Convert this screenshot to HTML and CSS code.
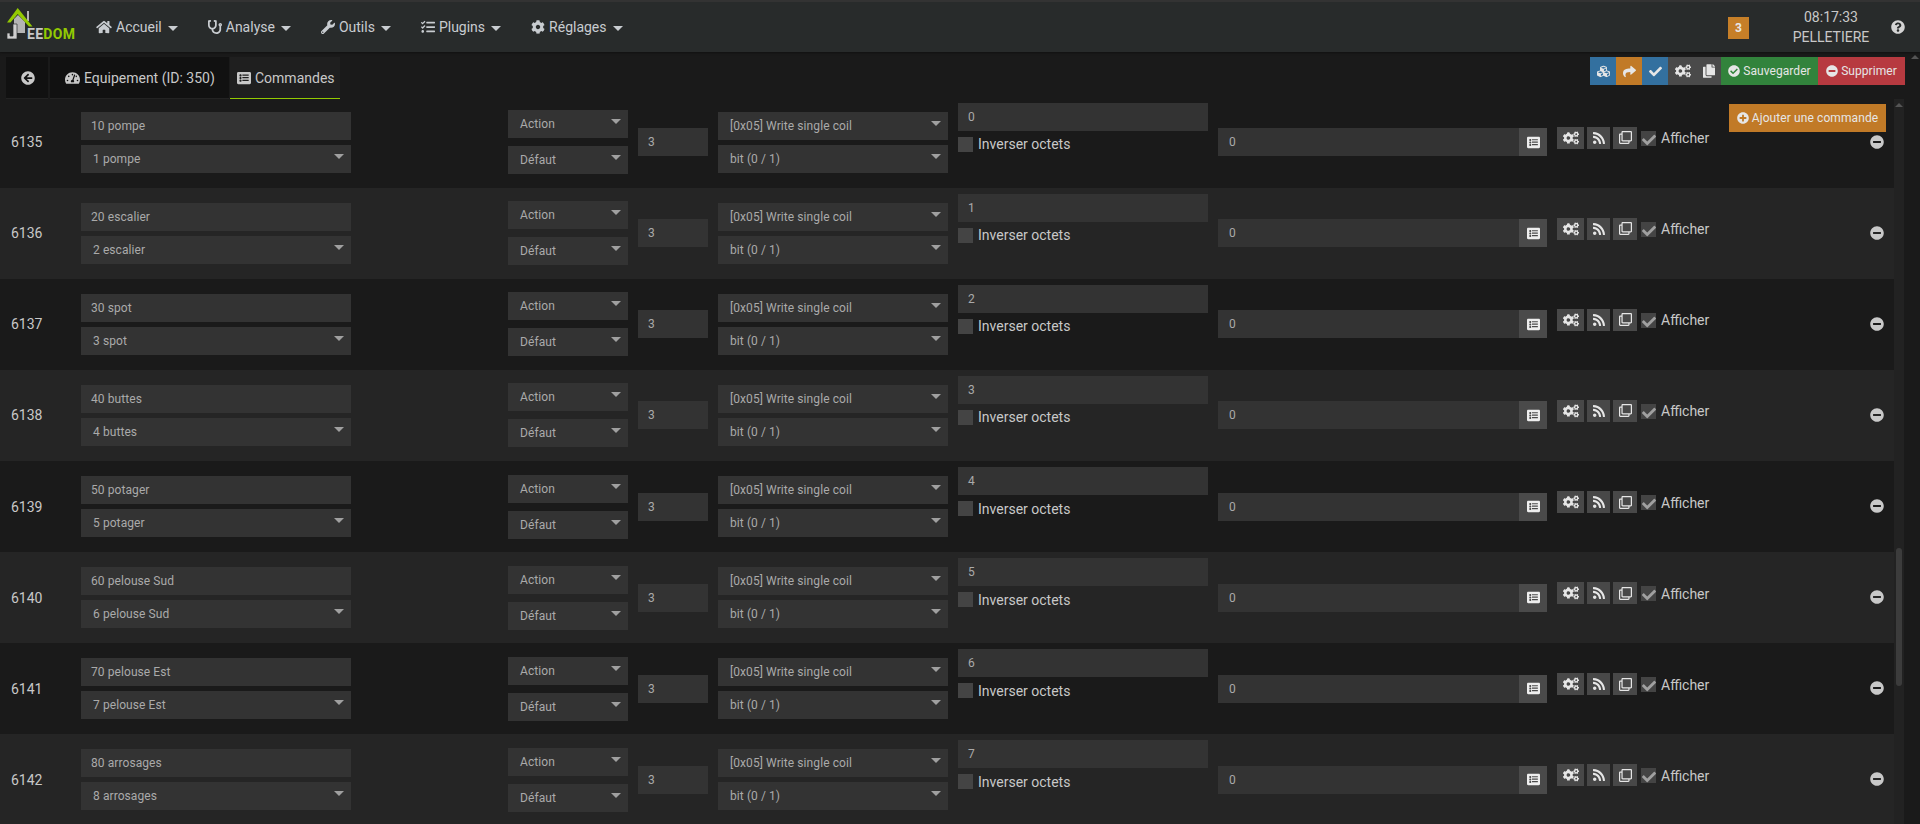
FILE: index.html
```html
<!DOCTYPE html>
<html lang="fr">
<head>
<meta charset="utf-8">
<title>Jeedom - Commandes</title>
<link rel="stylesheet" href="styles.css">
</head>
<body>
<svg class="sprite" xmlns="http://www.w3.org/2000/svg">
<symbol id="i-home" viewBox="0 0 576 512"><path d="M280.37 148.26L96 300.11V464a16 16 0 0 0 16 16l112.06-.29a16 16 0 0 0 15.92-16V368a16 16 0 0 1 16-16h64a16 16 0 0 1 16 16v95.64a16 16 0 0 0 16 16.05L464 480a16 16 0 0 0 16-16V300L295.67 148.26a12.19 12.19 0 0 0-15.3 0zM571.6 251.47L488 182.56V44.05a12 12 0 0 0-12-12h-56a12 12 0 0 0-12 12v72.61L318.47 43a48 48 0 0 0-61 0L4.34 251.47a12 12 0 0 0-1.6 16.9l25.5 31A12 12 0 0 0 45.15 301l235.22-193.74a12.19 12.19 0 0 1 15.3 0L530.9 301a12 12 0 0 0 16.9-1.6l25.5-31a12 12 0 0 0-1.7-16.93z"/></symbol>
<symbol id="i-steth" viewBox="0 0 512 512"><path d="M447.1 112c-34.2.5-62.3 28.4-63 62.6-.5 24.3 12.5 45.6 32 56.8V344c0 57.3-50.2 104-112 104-60 0-109.2-44.1-111.9-99.2C265 333.8 320 269.2 320 192V36.6c0-11.4-8.1-21.3-19.3-23.5L237.8.5c-13-2.6-25.6 5.8-28.2 18.8L206.4 35c-2.6 13 5.8 25.6 18.8 28.2l30.7 6.1v121.4c0 52.9-42.2 96.7-95.1 97.2-53.4.5-96.9-42.7-96.9-96V69.4l30.7-6.1c13-2.6 21.4-15.2 18.8-28.2l-3.1-15.7C107.7 6.4 95.1-2 82.1.6L19.3 13C8.1 15.3 0 25.1 0 36.6V192c0 77.3 55.1 142 128.1 156.8C130.7 439.2 208.6 512 304 512c97 0 176-75.4 176-168V231.4c19.1-11.1 32-31.7 32-55.4 0-35.7-29.2-64.5-64.9-64zm.9 80c-8.8 0-16-7.2-16-16s7.2-16 16-16 16 7.2 16 16-7.2 16-16 16z"/></symbol>
<symbol id="i-wrench" viewBox="0 0 512 512"><path d="M507.73 109.1c-2.24-9.03-13.54-12.09-20.12-5.51l-74.36 74.36-67.88-11.31-11.31-67.88 74.36-74.36c6.62-6.62 3.43-17.9-5.66-20.16-47.38-11.74-99.55.91-136.58 37.93-39.64 39.64-50.55 97.1-34.05 147.2L18.74 402.76c-24.99 24.99-24.99 65.51 0 90.5 24.99 24.99 65.51 24.99 90.5 0l213.21-213.21c50.12 16.71 107.47 5.68 147.37-34.22 37.07-37.07 49.7-89.32 37.91-136.73zM64 472c-13.25 0-24-10.75-24-24 0-13.26 10.75-24 24-24s24 10.74 24 24c0 13.25-10.75 24-24 24z"/></symbol>
<symbol id="i-tasks" viewBox="0 0 512 512"><path d="M139.61 35.5a12 12 0 0 0-17 0L58.93 98.81l-22.7-22.12a12 12 0 0 0-17 0L3.53 92.41a12 12 0 0 0 0 17l47.59 47.4a12.78 12.78 0 0 0 17.61 0l15.59-15.62L156.52 69a12.09 12.09 0 0 0 .09-17zm0 159.19a12 12 0 0 0-17 0l-63.68 63.72-22.7-22.1a12 12 0 0 0-17 0L3.53 252a12 12 0 0 0 0 17L51 316.5a12.77 12.77 0 0 0 17.6 0l15.7-15.69 72.2-72.22a12 12 0 0 0 .09-16.9zM64 368c-26.49 0-48.59 21.5-48.59 48S37.53 464 64 464a48 48 0 0 0 0-96zm432 16H208a16 16 0 0 0-16 16v32a16 16 0 0 0 16 16h288a16 16 0 0 0 16-16v-32a16 16 0 0 0-16-16zm0-320H208a16 16 0 0 0-16 16v32a16 16 0 0 0 16 16h288a16 16 0 0 0 16-16V80a16 16 0 0 0-16-16zm0 160H208a16 16 0 0 0-16 16v32a16 16 0 0 0 16 16h288a16 16 0 0 0 16-16v-32a16 16 0 0 0-16-16z"/></symbol>
<symbol id="i-cog" viewBox="0 0 512 512"><path d="M487.4 315.7l-42.6-24.6c4.3-23.2 4.3-47 0-70.2l42.6-24.6c4.9-2.8 7.1-8.6 5.5-14-11.1-35.6-30-67.8-54.7-94.6-3.8-4.1-10-5.1-14.8-2.3L380.8 110c-17.9-15.4-38.5-27.3-60.8-35.1V25.8c0-5.6-3.9-10.5-9.4-11.7-36.7-8.2-74.3-7.8-109.2 0-5.5 1.2-9.4 6.1-9.4 11.7V75c-22.2 7.9-42.8 19.8-60.8 35.1L88.7 85.5c-4.9-2.8-11-1.9-14.8 2.3-24.7 26.7-43.6 58.9-54.7 94.6-1.7 5.4.6 11.2 5.5 14L67.3 221c-4.3 23.2-4.3 47 0 70.2l-42.6 24.6c-4.9 2.8-7.1 8.6-5.5 14 11.1 35.6 30 67.8 54.7 94.6 3.8 4.1 10 5.1 14.8 2.3l42.6-24.6c17.9 15.4 38.5 27.3 60.8 35.1v49.2c0 5.6 3.9 10.5 9.4 11.7 36.7 8.2 74.3 7.8 109.2 0 5.5-1.2 9.4-6.1 9.4-11.7v-49.2c22.2-7.9 42.8-19.8 60.8-35.1l42.6 24.6c4.9 2.8 11 1.9 14.8-2.3 24.7-26.7 43.6-58.9 54.7-94.6 1.5-5.5-.7-11.3-5.6-14.1zM256 336c-44.1 0-80-35.9-80-80s35.9-80 80-80 80 35.9 80 80-35.9 80-80 80z"/></symbol>
<symbol id="i-back" viewBox="0 0 512 512"><path d="M256 504C119 504 8 393 8 256S119 8 256 8s248 111 248 248-111 248-248 248zm28.9-143.6L209.4 288H392c13.3 0 24-10.7 24-24v-16c0-13.3-10.7-24-24-24H209.4l75.5-72.4c9.7-9.3 9.9-24.8.4-34.3l-11-10.9c-9.4-9.4-24.6-9.4-33.9 0L107.7 239c-9.4 9.4-9.4 24.6 0 33.9l132.7 132.7c9.4 9.4 24.6 9.4 33.9 0l11-10.9c9.5-9.5 9.3-25-.4-34.3z"/></symbol>
<symbol id="i-gauge" viewBox="0 0 576 512"><path d="M288 32C128.94 32 0 160.94 0 320c0 52.8 14.25 102.26 39.06 144.8 5.61 9.62 16.3 15.2 27.44 15.2h443c11.14 0 21.83-5.58 27.44-15.2C561.75 422.26 576 372.8 576 320c0-159.06-128.94-288-288-288zm0 64c14.71 0 26.58 10.13 30.32 23.65-1.11 2.26-2.64 4.23-3.45 6.67l-9.22 27.67c-5.13 3.49-10.97 6.01-17.64 6.01-17.67 0-32-14.33-32-32S270.33 96 288 96zM96 384c-17.67 0-32-14.33-32-32s14.33-32 32-32 32 14.33 32 32-14.33 32-32 32zm48-160c-17.67 0-32-14.33-32-32s14.33-32 32-32 32 14.33 32 32-14.33 32-32 32zm246.77-72.41l-61.33 184C343.13 347.33 352 364.54 352 384c0 11.72-3.38 22.55-8.88 32H232.88c-5.5-9.45-8.88-20.28-8.88-32 0-33.94 26.5-61.43 59.9-63.59l61.34-184.01c4.17-12.56 17.73-19.45 30.36-15.17 12.57 4.19 19.35 17.79 15.17 30.36zm14.66 57.2l15.52-46.55c3.47-1.29 7.13-2.23 11.05-2.23 17.67 0 32 14.33 32 32s-14.33 32-32 32c-11.38-.01-20.89-6.28-26.57-15.22zM480 384c-17.67 0-32-14.33-32-32s14.33-32 32-32 32 14.33 32 32-14.33 32-32 32z"/></symbol>
<symbol id="i-list" viewBox="0 0 512 512"><path d="M464 32H48C21.49 32 0 53.49 0 80v352c0 26.51 21.49 48 48 48h416c26.51 0 48-21.49 48-48V80c0-26.51-21.49-48-48-48zM128 120c22.091 0 40 17.909 40 40s-17.909 40-40 40-40-17.909-40-40 17.909-40 40-40zm0 96c22.091 0 40 17.909 40 40s-17.909 40-40 40-40-17.909-40-40 17.909-40 40-40zm0 96c22.091 0 40 17.909 40 40s-17.909 40-40 40-40-17.909-40-40 17.909-40 40-40zm288 52H208c-6.6 0-12-5.4-12-12v-24c0-6.6 5.4-12 12-12h208c6.6 0 12 5.4 12 12v24c0 6.6-5.4 12-12 12zm0-96H208c-6.6 0-12-5.4-12-12v-24c0-6.6 5.4-12 12-12h208c6.6 0 12 5.4 12 12v24c0 6.6-5.4 12-12 12zm0-96H208c-6.6 0-12-5.4-12-12v-24c0-6.6 5.4-12 12-12h208c6.6 0 12 5.4 12 12v24c0 6.6-5.4 12-12 12z"/></symbol>
<symbol id="i-cogs" viewBox="0 0 640 512"><path d="M512.1 191l-8.2 14.3c-3 5.3-9.4 7.5-15.1 5.4-11.8-4.4-22.6-10.7-32.1-18.6-4.6-3.8-5.8-10.5-2.8-15.7l8.2-14.3c-6.9-8-12.3-17.3-15.9-27.4h-16.5c-6 0-11.2-4.3-12.2-10.3-2-12-2.1-24.6 0-37.1 1-6 6.2-10.4 12.2-10.4h16.5c3.6-10.1 9-19.4 15.9-27.4l-8.2-14.3c-3-5.2-1.9-11.9 2.8-15.7 9.5-7.9 20.4-14.2 32.1-18.6 5.7-2.1 12.1.1 15.1 5.4l8.2 14.3c10.5-1.9 21.2-1.9 31.7 0L552 6.3c3-5.3 9.4-7.5 15.1-5.4 11.8 4.4 22.6 10.7 32.1 18.6 4.6 3.8 5.8 10.5 2.8 15.7l-8.2 14.3c6.9 8 12.3 17.3 15.9 27.4h16.5c6 0 11.2 4.3 12.2 10.3 2 12 2.1 24.6 0 37.1-1 6-6.2 10.4-12.2 10.4h-16.5c-3.6 10.1-9 19.4-15.9 27.4l8.2 14.3c3 5.2 1.9 11.9-2.8 15.7-9.5 7.9-20.4 14.2-32.1 18.6-5.7 2.1-12.1-.1-15.1-5.4l-8.2-14.3c-10.4 1.9-21.2 1.9-31.7 0zm-10.5-58.8c38.5 29.6 82.4-14.3 52.8-52.8-38.5-29.7-82.4 14.3-52.8 52.8zM386.3 286.1l33.7 16.8c10.1 5.8 14.5 18.1 10.5 29.1-8.9 24.2-26.4 46.4-42.6 65.8-7.4 8.9-20.2 11.1-30.3 5.3l-29.1-16.8c-16 13.7-34.6 24.6-54.9 31.7v33.6c0 11.6-8.3 21.6-19.7 23.6-24.6 4.2-50.4 4.4-75.9 0-11.5-2-20-11.9-20-23.6V418c-20.3-7.2-38.9-18-54.9-31.7L74 403c-10 5.8-22.9 3.6-30.3-5.3-16.2-19.4-33.3-41.6-42.2-65.7-4-10.9.4-23.2 10.5-29.1l33.3-16.8c-3.9-20.9-3.9-42.4 0-63.4L12 205.8c-10.1-5.8-14.6-18.1-10.5-29 8.9-24.2 26-46.4 42.2-65.8 7.4-8.9 20.2-11.1 30.3-5.3l29.1 16.8c16-13.7 34.6-24.6 54.9-31.7V57.1c0-11.5 8.2-21.5 19.6-23.5 24.6-4.2 50.5-4.4 76-.1 11.5 2 20 11.9 20 23.6v33.6c20.3 7.2 38.9 18 54.9 31.7l29.1-16.8c10-5.8 22.9-3.6 30.3 5.3 16.2 19.4 33.2 41.6 42.1 65.8 4 10.9.1 23.2-10 29.1l-33.7 16.8c3.9 21 3.9 42.5 0 63.5zm-117.6 21.1c59.2-77-28.7-164.9-105.7-105.7-59.2 77 28.7 164.9 105.7 105.7zm243.4 182.7l-8.2 14.3c-3 5.3-9.4 7.5-15.1 5.4-11.8-4.4-22.6-10.7-32.1-18.6-4.6-3.8-5.8-10.5-2.8-15.7l8.2-14.3c-6.9-8-12.3-17.3-15.9-27.4h-16.5c-6 0-11.2-4.3-12.2-10.3-2-12-2.1-24.6 0-37.1 1-6 6.2-10.4 12.2-10.4h16.5c3.6-10.1 9-19.4 15.9-27.4l-8.2-14.3c-3-5.2-1.9-11.9 2.8-15.7 9.5-7.9 20.4-14.2 32.1-18.6 5.7-2.1 12.1.1 15.1 5.4l8.2 14.3c10.5-1.9 21.2-1.9 31.7 0l8.2-14.3c3-5.3 9.4-7.5 15.1-5.4 11.8 4.4 22.6 10.7 32.1 18.6 4.6 3.8 5.8 10.5 2.8 15.7l-8.2 14.3c6.9 8 12.3 17.3 15.9 27.4h16.5c6 0 11.2 4.3 12.2 10.3 2 12 2.1 24.6 0 37.1-1 6-6.2 10.4-12.2 10.4h-16.5c-3.6 10.1-9 19.4-15.9 27.4l8.2 14.3c3 5.2 1.9 11.9-2.8 15.7-9.5 7.9-20.4 14.2-32.1 18.6-5.7 2.1-12.1-.1-15.1-5.4l-8.2-14.3c-10.4 1.9-21.2 1.9-31.7 0zM501.6 431c38.5 29.6 82.4-14.3 52.8-52.8-38.5-29.6-82.4 14.3-52.8 52.8z"/></symbol>
<symbol id="i-rss" viewBox="0 0 448 512"><path d="M128.081 415.959c0 35.369-28.672 64.041-64.041 64.041S0 451.328 0 415.959s28.672-64.041 64.041-64.041 64.04 28.673 64.04 64.041zm175.66 47.25c-8.354-154.6-132.185-278.587-286.95-286.95C7.656 175.765 0 183.105 0 192.253v48.069c0 8.415 6.49 15.472 14.887 16.018 111.832 7.284 201.473 96.702 208.772 208.772.547 8.397 7.604 14.887 16.018 14.887h48.069c9.149.001 16.489-7.655 15.995-16.79zm144.249.288C439.596 229.677 251.465 40.445 16.503 32.01 7.473 31.686 0 38.981 0 48.016v48.068c0 8.625 6.835 15.645 15.453 15.999 191.179 7.839 344.627 161.316 352.465 352.465.353 8.618 7.373 15.453 15.999 15.453h48.068c9.034-.001 16.329-7.474 16.005-16.504z"/></symbol>
<symbol id="i-clone" viewBox="0 0 512 512"><path d="M464 0H144c-26.51 0-48 21.49-48 48v48H48c-26.51 0-48 21.49-48 48v320c0 26.51 21.49 48 48 48h320c26.51 0 48-21.49 48-48v-48h48c26.51 0 48-21.49 48-48V48c0-26.51-21.49-48-48-48zM362 464H54a6 6 0 0 1-6-6V150a6 6 0 0 1 6-6h42v224c0 26.51 21.49 48 48 48h224v42a6 6 0 0 1-6 6zm96-96H150a6 6 0 0 1-6-6V54a6 6 0 0 1 6-6h308a6 6 0 0 1 6 6v308a6 6 0 0 1-6 6z"/></symbol>
<symbol id="i-copy" viewBox="0 0 448 512"><path d="M320 448v40c0 13.255-10.745 24-24 24H24c-13.255 0-24-10.745-24-24V120c0-13.255 10.745-24 24-24h72v296c0 30.879 25.121 56 56 56h168zm0-344V0H152c-13.255 0-24 10.745-24 24v368c0 13.255 10.745 24 24 24h272c13.255 0 24-10.745 24-24V128H344c-13.2 0-24-10.8-24-24zm120.971-31.029L375.029 7.029A24 24 0 0 0 358.059 0H352v96h96v-6.059a24 24 0 0 0-7.029-16.97z"/></symbol>
<symbol id="i-share" viewBox="0 0 512 512"><path d="M503.691 189.836L327.687 37.851C312.281 24.546 288 35.347 288 56.015v80.053C127.371 137.907 0 170.1 0 322.326c0 61.441 39.581 122.309 83.333 154.132 13.653 9.931 33.111-2.533 28.077-18.631C66.066 312.814 132.917 274.316 288 272.085V360c0 20.7 24.3 31.453 39.687 18.164l176.004-152c11.071-9.562 11.086-26.753 0-36.328z"/></symbol>
<symbol id="i-check" viewBox="0 0 512 512"><path d="M173.898 439.404l-166.4-166.4c-9.997-9.997-9.997-26.206 0-36.204l36.203-36.204c9.997-9.998 26.207-9.998 36.204 0L192 312.69 432.095 72.596c9.997-9.997 26.207-9.997 36.204 0l36.203 36.204c9.997 9.997 9.997 26.206 0 36.204l-294.4 294.401c-9.998 9.997-26.207 9.997-36.204-.001z"/></symbol>
<symbol id="i-ok" viewBox="0 0 512 512"><path d="M504 256c0 136.967-111.033 248-248 248S8 392.967 8 256 119.033 8 256 8s248 111.033 248 248zM227.314 387.314l184-184c6.248-6.248 6.248-16.379 0-22.627l-22.627-22.627c-6.248-6.249-16.379-6.249-22.628 0L216 308.118l-70.059-70.059c-6.248-6.248-16.379-6.248-22.628 0l-22.627 22.627c-6.248 6.248-6.248 16.379 0 22.627l104 104c6.249 6.249 16.379 6.249 22.628.001z"/></symbol>
<symbol id="i-minus" viewBox="0 0 512 512"><path d="M256 8C119 8 8 119 8 256s111 248 248 248 248-111 248-248S393 8 256 8zM124 296c-6.6 0-12-5.4-12-12v-56c0-6.6 5.4-12 12-12h264c6.6 0 12 5.4 12 12v56c0 6.6-5.4 12-12 12H124z"/></symbol>
<symbol id="i-plus" viewBox="0 0 512 512"><path d="M256 8C119 8 8 119 8 256s111 248 248 248 248-111 248-248S393 8 256 8zm144 276c0 6.6-5.4 12-12 12h-92v92c0 6.6-5.4 12-12 12h-56c-6.6 0-12-5.4-12-12v-92h-92c-6.6 0-12-5.4-12-12v-56c0-6.6 5.4-12 12-12h92v-92c0-6.6 5.4-12 12-12h56c6.6 0 12 5.4 12 12v92h92c6.6 0 12 5.4 12 12v56z"/></symbol>
<symbol id="i-help" viewBox="0 0 512 512"><path d="M504 256c0 136.997-111.043 248-248 248S8 392.997 8 256C8 119.083 119.043 8 256 8s248 111.083 248 248zM262.655 90c-54.497 0-89.255 22.957-116.549 63.758-3.536 5.286-2.353 12.415 2.715 16.258l34.699 26.31c5.205 3.947 12.621 3.008 16.665-2.122 17.864-22.658 30.113-35.797 57.303-35.797 20.429 0 45.698 13.148 45.698 32.958 0 14.976-12.363 22.667-32.534 33.976C247.128 238.528 216 254.941 216 296v4c0 6.627 5.373 12 12 12h56c6.627 0 12-5.373 12-12v-1.333c0-28.462 83.186-29.647 83.186-106.667 0-58.002-60.165-102-116.531-102zM256 338c-25.365 0-46 20.635-46 46 0 25.364 20.635 46 46 46s46-20.636 46-46c0-25.365-20.635-46-46-46z"/></symbol>
<symbol id="i-cubes" viewBox="0 0 512 512"><path d="M488.6 250.2L392 214V105.5c0-15-9.3-28.4-23.4-33.7l-100-37.5c-8.1-3.1-17.1-3.1-25.3 0l-100 37.5c-14.1 5.3-23.4 18.7-23.4 33.7V214l-96.6 36.2C9.3 255.5 0 268.9 0 283.9V394c0 13.6 7.7 26.1 19.9 32.2l100 50c10.1 5.1 22.1 5.1 32.2 0l103.9-52 103.9 52c10.1 5.1 22.1 5.1 32.2 0l100-50c12.2-6.1 19.9-18.6 19.9-32.2V283.9c0-15-9.3-28.4-23.4-33.7zM358 214.8l-85 31.9v-68.2l85-37v73.3zM154 104.1l102-38.2 102 38.2v.6l-102 41.4-102-41.4v-.6zm84 291.1l-85 42.5v-79.1l85-38.8v75.4zm0-112l-102 41.4-102-41.4v-.6l102-38.2 102 38.2v.6zm240 112l-85 42.5v-79.1l85-38.8v75.4zm0-112l-102 41.4-102-41.4v-.6l102-38.2 102 38.2v.6z"/></symbol>
</svg>

<header class="topbar">
  <a class="logo">
    <svg class="logo-mark" viewBox="0 0 32 34">
      <path class="logo-chimney" d="M21 4 H23 V14 H21 Z"/>
      <path class="logo-house" d="M8 12 L12 8 L19 15 V26 H8 Z"/>
      <path class="logo-j" d="M7 17 H11 V32 H1 V26 H4 V29 H7 Z"/>
      <path class="logo-roof" d="M11.700 1 L26.500 19.500 H23 L11.700 7 L4.500 15.500 H1 Z"/>
    </svg>
    <span class="logo-text"><span class="logo-ee">EE</span><span class="logo-dom">DOM</span></span>
  </a>
  <nav class="menu">
    <a class="menu-item"><svg class="ic ic-home"><use href="#i-home"/></svg>Accueil<i class="caret"></i></a>
    <a class="menu-item"><svg class="ic"><use href="#i-steth"/></svg>Analyse<i class="caret"></i></a>
    <a class="menu-item"><svg class="ic"><use href="#i-wrench"/></svg>Outils<i class="caret"></i></a>
    <a class="menu-item"><svg class="ic"><use href="#i-tasks"/></svg>Plugins<i class="caret"></i></a>
    <a class="menu-item"><svg class="ic"><use href="#i-cog"/></svg>Réglages<i class="caret"></i></a>
  </nav>
  <div class="top-right">
    <span class="badge">3</span>
    <div class="clock"><span>08:17:33</span><span>PELLETIERE</span></div>
    <svg class="ic help"><use href="#i-help"/></svg>
  </div>
</header>

<div class="tabbar">
  <ul class="tabs">
    <li class="tab tab-back"><svg class="ic"><use href="#i-back"/></svg></li>
    <li class="tab tab-eq"><svg class="ic"><use href="#i-gauge"/></svg>Equipement (ID: 350)</li>
    <li class="tab tab-active"><svg class="ic"><use href="#i-list"/></svg>Commandes</li>
  </ul>
  <div class="actions">
    <a class="act act-blue"><svg class="ic"><use href="#i-cubes"/></svg></a>
    <a class="act act-orange"><svg class="ic"><use href="#i-share"/></svg></a>
    <a class="act act-blue"><svg class="ic"><use href="#i-check"/></svg></a>
    <a class="act act-gray"><svg class="ic"><use href="#i-cogs"/></svg><svg class="ic"><use href="#i-copy"/></svg></a>
    <a class="act act-green"><svg class="ic"><use href="#i-ok"/></svg>Sauvegarder</a>
    <a class="act act-red"><svg class="ic"><use href="#i-minus"/></svg>Supprimer</a>
  </div>
  <i class="page-arrow"></i>
</div>

<main class="content">
  <section class="list">
    <a class="add-cmd"><svg class="ic"><use href="#i-plus"/></svg>Ajouter une commande</a>
    <div class="rows">

      <div class="row">
        <div class="c-id">6135</div>
        <div class="c-name"><div class="field">10 pompe</div><div class="field sel">1 pompe</div></div>
        <div class="c-type"><div class="field sel">Action</div><div class="field sel">Défaut</div></div>
        <div class="c-slave"><div class="field">3</div></div>
        <div class="c-func"><div class="field sel">[0x05] Write single coil</div><div class="field sel">bit (0 / 1)</div></div>
        <div class="c-val"><div class="field">0</div><label class="chk"><i class="box"></i>Inverser octets</label></div>
        <div class="c-def"><div class="field">0</div><span class="addon"><svg class="ic"><use href="#i-list"/></svg></span></div>
        <div class="c-act"><a class="mini m-cogs"><svg class="ic"><use href="#i-cogs"/></svg></a><a class="mini m-rss"><svg class="ic"><use href="#i-rss"/></svg></a><a class="mini m-clone"><svg class="ic"><use href="#i-clone"/></svg></a><label class="chk chk-on"><i class="box"><svg class="ic"><use href="#i-check"/></svg></i>Afficher</label><svg class="ic del"><use href="#i-minus"/></svg></div>
      </div>

      <div class="row">
        <div class="c-id">6136</div>
        <div class="c-name"><div class="field">20 escalier</div><div class="field sel">2 escalier</div></div>
        <div class="c-type"><div class="field sel">Action</div><div class="field sel">Défaut</div></div>
        <div class="c-slave"><div class="field">3</div></div>
        <div class="c-func"><div class="field sel">[0x05] Write single coil</div><div class="field sel">bit (0 / 1)</div></div>
        <div class="c-val"><div class="field">1</div><label class="chk"><i class="box"></i>Inverser octets</label></div>
        <div class="c-def"><div class="field">0</div><span class="addon"><svg class="ic"><use href="#i-list"/></svg></span></div>
        <div class="c-act"><a class="mini m-cogs"><svg class="ic"><use href="#i-cogs"/></svg></a><a class="mini m-rss"><svg class="ic"><use href="#i-rss"/></svg></a><a class="mini m-clone"><svg class="ic"><use href="#i-clone"/></svg></a><label class="chk chk-on"><i class="box"><svg class="ic"><use href="#i-check"/></svg></i>Afficher</label><svg class="ic del"><use href="#i-minus"/></svg></div>
      </div>

      <div class="row">
        <div class="c-id">6137</div>
        <div class="c-name"><div class="field">30 spot</div><div class="field sel">3 spot</div></div>
        <div class="c-type"><div class="field sel">Action</div><div class="field sel">Défaut</div></div>
        <div class="c-slave"><div class="field">3</div></div>
        <div class="c-func"><div class="field sel">[0x05] Write single coil</div><div class="field sel">bit (0 / 1)</div></div>
        <div class="c-val"><div class="field">2</div><label class="chk"><i class="box"></i>Inverser octets</label></div>
        <div class="c-def"><div class="field">0</div><span class="addon"><svg class="ic"><use href="#i-list"/></svg></span></div>
        <div class="c-act"><a class="mini m-cogs"><svg class="ic"><use href="#i-cogs"/></svg></a><a class="mini m-rss"><svg class="ic"><use href="#i-rss"/></svg></a><a class="mini m-clone"><svg class="ic"><use href="#i-clone"/></svg></a><label class="chk chk-on"><i class="box"><svg class="ic"><use href="#i-check"/></svg></i>Afficher</label><svg class="ic del"><use href="#i-minus"/></svg></div>
      </div>

      <div class="row">
        <div class="c-id">6138</div>
        <div class="c-name"><div class="field">40 buttes</div><div class="field sel">4 buttes</div></div>
        <div class="c-type"><div class="field sel">Action</div><div class="field sel">Défaut</div></div>
        <div class="c-slave"><div class="field">3</div></div>
        <div class="c-func"><div class="field sel">[0x05] Write single coil</div><div class="field sel">bit (0 / 1)</div></div>
        <div class="c-val"><div class="field">3</div><label class="chk"><i class="box"></i>Inverser octets</label></div>
        <div class="c-def"><div class="field">0</div><span class="addon"><svg class="ic"><use href="#i-list"/></svg></span></div>
        <div class="c-act"><a class="mini m-cogs"><svg class="ic"><use href="#i-cogs"/></svg></a><a class="mini m-rss"><svg class="ic"><use href="#i-rss"/></svg></a><a class="mini m-clone"><svg class="ic"><use href="#i-clone"/></svg></a><label class="chk chk-on"><i class="box"><svg class="ic"><use href="#i-check"/></svg></i>Afficher</label><svg class="ic del"><use href="#i-minus"/></svg></div>
      </div>

      <div class="row">
        <div class="c-id">6139</div>
        <div class="c-name"><div class="field">50 potager</div><div class="field sel">5 potager</div></div>
        <div class="c-type"><div class="field sel">Action</div><div class="field sel">Défaut</div></div>
        <div class="c-slave"><div class="field">3</div></div>
        <div class="c-func"><div class="field sel">[0x05] Write single coil</div><div class="field sel">bit (0 / 1)</div></div>
        <div class="c-val"><div class="field">4</div><label class="chk"><i class="box"></i>Inverser octets</label></div>
        <div class="c-def"><div class="field">0</div><span class="addon"><svg class="ic"><use href="#i-list"/></svg></span></div>
        <div class="c-act"><a class="mini m-cogs"><svg class="ic"><use href="#i-cogs"/></svg></a><a class="mini m-rss"><svg class="ic"><use href="#i-rss"/></svg></a><a class="mini m-clone"><svg class="ic"><use href="#i-clone"/></svg></a><label class="chk chk-on"><i class="box"><svg class="ic"><use href="#i-check"/></svg></i>Afficher</label><svg class="ic del"><use href="#i-minus"/></svg></div>
      </div>

      <div class="row">
        <div class="c-id">6140</div>
        <div class="c-name"><div class="field">60 pelouse Sud</div><div class="field sel">6 pelouse Sud</div></div>
        <div class="c-type"><div class="field sel">Action</div><div class="field sel">Défaut</div></div>
        <div class="c-slave"><div class="field">3</div></div>
        <div class="c-func"><div class="field sel">[0x05] Write single coil</div><div class="field sel">bit (0 / 1)</div></div>
        <div class="c-val"><div class="field">5</div><label class="chk"><i class="box"></i>Inverser octets</label></div>
        <div class="c-def"><div class="field">0</div><span class="addon"><svg class="ic"><use href="#i-list"/></svg></span></div>
        <div class="c-act"><a class="mini m-cogs"><svg class="ic"><use href="#i-cogs"/></svg></a><a class="mini m-rss"><svg class="ic"><use href="#i-rss"/></svg></a><a class="mini m-clone"><svg class="ic"><use href="#i-clone"/></svg></a><label class="chk chk-on"><i class="box"><svg class="ic"><use href="#i-check"/></svg></i>Afficher</label><svg class="ic del"><use href="#i-minus"/></svg></div>
      </div>

      <div class="row">
        <div class="c-id">6141</div>
        <div class="c-name"><div class="field">70 pelouse Est</div><div class="field sel">7 pelouse Est</div></div>
        <div class="c-type"><div class="field sel">Action</div><div class="field sel">Défaut</div></div>
        <div class="c-slave"><div class="field">3</div></div>
        <div class="c-func"><div class="field sel">[0x05] Write single coil</div><div class="field sel">bit (0 / 1)</div></div>
        <div class="c-val"><div class="field">6</div><label class="chk"><i class="box"></i>Inverser octets</label></div>
        <div class="c-def"><div class="field">0</div><span class="addon"><svg class="ic"><use href="#i-list"/></svg></span></div>
        <div class="c-act"><a class="mini m-cogs"><svg class="ic"><use href="#i-cogs"/></svg></a><a class="mini m-rss"><svg class="ic"><use href="#i-rss"/></svg></a><a class="mini m-clone"><svg class="ic"><use href="#i-clone"/></svg></a><label class="chk chk-on"><i class="box"><svg class="ic"><use href="#i-check"/></svg></i>Afficher</label><svg class="ic del"><use href="#i-minus"/></svg></div>
      </div>

      <div class="row">
        <div class="c-id">6142</div>
        <div class="c-name"><div class="field">80 arrosages</div><div class="field sel">8 arrosages</div></div>
        <div class="c-type"><div class="field sel">Action</div><div class="field sel">Défaut</div></div>
        <div class="c-slave"><div class="field">3</div></div>
        <div class="c-func"><div class="field sel">[0x05] Write single coil</div><div class="field sel">bit (0 / 1)</div></div>
        <div class="c-val"><div class="field">7</div><label class="chk"><i class="box"></i>Inverser octets</label></div>
        <div class="c-def"><div class="field">0</div><span class="addon"><svg class="ic"><use href="#i-list"/></svg></span></div>
        <div class="c-act"><a class="mini m-cogs"><svg class="ic"><use href="#i-cogs"/></svg></a><a class="mini m-rss"><svg class="ic"><use href="#i-rss"/></svg></a><a class="mini m-clone"><svg class="ic"><use href="#i-clone"/></svg></a><label class="chk chk-on"><i class="box"><svg class="ic"><use href="#i-check"/></svg></i>Afficher</label><svg class="ic del"><use href="#i-minus"/></svg></div>
      </div>

    </div>
  </section>
  <aside class="scrollbar"><i class="sb-arrow"></i><i class="sb-thumb"></i></aside>
</main>
</body>
</html>
```

FILE: styles.css
```css
* { box-sizing: border-box; }
html, body { margin: 0; height: 100%; }
body {
  height: 824px;
  overflow: hidden;
  display: flex;
  flex-direction: column;
  background: #1a1a1a;
  color: #c8c8c8;
  font-family: Roboto, "Liberation Sans", sans-serif;
  font-size: 14px;
}
.sprite { display: none; }
.ic { width: 14px; height: 14px; fill: currentColor; flex: none; display: block; }

/* top bar */
.topbar {
  flex: none;
  height: 52px;
  display: flex;
  align-items: center;
  background: #282b2b;
  border-top: 2px solid #333;
  box-shadow: 0 1px 2px #111;
  position: relative;
}
.logo { width: 96px; height: 50px; flex: none; display: block; position: relative; }
.logo-mark { position: absolute; left: 6px; top: 5px; width: 32px; height: 34px; }
.logo-house, .logo-chimney { fill: #b4b4b4; }
.logo-j { fill: #cfcfcf; stroke: #282b2b; stroke-width: 0.7; }
.logo-roof { fill: #93ca02; }
.logo-text { position: absolute; left: 27px; top: 24px; font-size: 14px; font-weight: 700; line-height: 16px; letter-spacing: 0.3px; }
.logo-ee { color: #c8c8c8; }
.logo-dom { color: #93ca02; }
.menu { display: flex; align-items: center; height: 100%; }
.menu-item { display: flex; align-items: center; color: #c8ccd0; gap: 4px; margin-right: 30px; }
.ic-home { width: 16px; }
.caret { width: 0; height: 0; margin-left: 2px; margin-top: 2px; border-left: 5px solid transparent; border-right: 5px solid transparent; border-top: 5px solid #c8ccd0; }
.top-right { margin-left: auto; display: flex; align-items: center; height: 100%; }
.badge { width: 21px; height: 22px; margin-top: 2px; background: #c67f28; color: #e8e8e8; font-size: 12px; font-weight: 700; display: flex; align-items: center; justify-content: center; }
.clock { width: 120px; margin-left: 22px; display: flex; flex-direction: column; align-items: center; line-height: 20px; }
.help { width: 14px; height: 14px; margin-right: 15px; color: #d4d4d4; }

/* tabs + action bar */
.tabbar { flex: none; height: 42px; margin-top: 5px; padding-left: 6px; display: flex; position: relative; z-index: 2; background: #1a1a1a; }
.tabs { list-style: none; margin: 0; padding: 0; display: flex; height: 100%; }
.tab { display: flex; align-items: center; gap: 4px; height: 100%; background: #111; border-bottom: 1px solid #232323; color: #c8c8c8; }
.tab-back { width: 42px; padding-left: 2px; justify-content: center; margin-right: 2px; }
.tab-eq { width: 179px; padding-left: 15px; margin-right: 1px; }
.tab-eq .ic { width: 15px; }
.tab-active { width: 110px; padding-left: 7px; background: #1f1f1f; border-bottom: 1px solid #93ca02; }
.actions { margin-left: auto; margin-right: 15px; height: 28px; display: flex; font-size: 12px; letter-spacing: 0.06px; color: #e6e6e6; }
.act { display: flex; align-items: center; justify-content: center; gap: 3px; height: 100%; }
.act-blue { width: 26px; background: #33709f; }
.act-orange { width: 26px; background: #c17a27; }
.act-gray { width: 53px; background: #4a4a4a; gap: 12px; }
.act-green { width: 97px; background: #32833c; }
.act-red { width: 87px; background: #b73a40; }
.act .ic { width: 13px; height: 13px; }
.act-green .ic, .act-red .ic { width: 12px; height: 12px; }
.act-gray .ic { height: 14px; width: 12px; }
.act-gray .ic:first-child { width: 16px; }
.page-arrow { position: absolute; right: 1px; top: -2px; border-left: 4px solid transparent; border-right: 4px solid transparent; border-bottom: 4px solid #555; }

/* list */
.content { flex: 1; min-height: 0; display: flex; }
.list { flex: 1; min-width: 0; position: relative; overflow: hidden; }
.add-cmd { position: absolute; z-index: 1; top: 5px; right: 8px; width: 157px; height: 28px; display: flex; align-items: center; justify-content: center; gap: 3px; background: #c17a27; color: #e6e6e6; font-size: 12px; letter-spacing: 0.1px; }
.add-cmd .ic { width: 12px; height: 12px; }
.rows { margin-top: -2.5px; }
.row { display: flex; height: 91.14px; align-items: center; background: #1a1a1a; font-size: 12px; }
.row:nth-child(even) { background: #252525; }
.field { height: 28px; line-height: 28px; background: #333; color: #aaa; padding-left: 10px; font-size: 12px; letter-spacing: 0.08px; position: relative; }
.sel { padding-left: 12px; }
.sel::after { content: ""; position: absolute; right: 7px; top: 9px; border-left: 5px solid transparent; border-right: 5px solid transparent; border-top: 5px solid #a0a0a0; }
.c-id { width: 81px; padding-left: 11px; font-size: 14px; color: #c8c8c8; }
.c-name { width: 427px; padding-right: 157px; display: flex; flex-direction: column; gap: 5px; }
.c-type { width: 130px; padding-right: 10px; display: flex; flex-direction: column; gap: 8px; }
.c-slave { width: 80px; padding-right: 10px; }
.c-func { width: 240px; padding-right: 10px; display: flex; flex-direction: column; gap: 5px; }
.c-val { width: 260px; padding-right: 10px; align-self: flex-start; padding-top: 6px; display: flex; flex-direction: column; gap: 6px; }
.c-def { width: 339px; padding-right: 10px; display: flex; }
.c-def .field { flex: 1; padding-left: 11px; font-size: 12px; }
.addon { width: 28px; height: 28px; background: #4a4a4a; color: #eee; display: flex; align-items: center; justify-content: center; }
.addon .ic { width: 13px; height: 13px; }
.chk { display: flex; align-items: center; gap: 5px; font-size: 14px; color: #c8c8c8; height: 15px; }
.box { width: 15px; height: 15px; background: #444; display: flex; align-items: center; justify-content: center; color: #a0a0a0; flex: none; }
.box .ic { width: 14px; height: 14px; margin-top: 3px; }
.c-act { flex: 1; align-self: stretch; padding: 30px 10px 0 0; display: flex; align-items: flex-start; }
.mini { height: 22px; background: #484848; color: #e6e6e6; display: flex; align-items: center; justify-content: center; }
.m-cogs { width: 27px; margin-right: 3px; }
.m-cogs .ic { width: 16px; }
.m-rss { width: 23px; margin-right: 3px; }
.m-rss .ic { width: 12px; height: 14px; }
.m-clone { width: 24px; margin-right: 4px; }
.m-clone .ic { width: 13px; height: 13px; }
.chk-on { margin-top: 4px; }
.del { width: 14px; height: 14px; margin-left: auto; margin-top: 8px; color: #c8c8c8; }

/* scrollbar */
.scrollbar { flex: none; width: 10px; margin-right: 16px; background: #222; position: relative; }
.sb-arrow { position: absolute; top: 4px; left: 1px; border-left: 4px solid transparent; border-right: 4px solid transparent; border-bottom: 4px solid #555; }
.sb-thumb { position: absolute; top: 449px; left: 2px; width: 6px; height: 138px; background: #3c3c3c; border-radius: 3px; }
```
